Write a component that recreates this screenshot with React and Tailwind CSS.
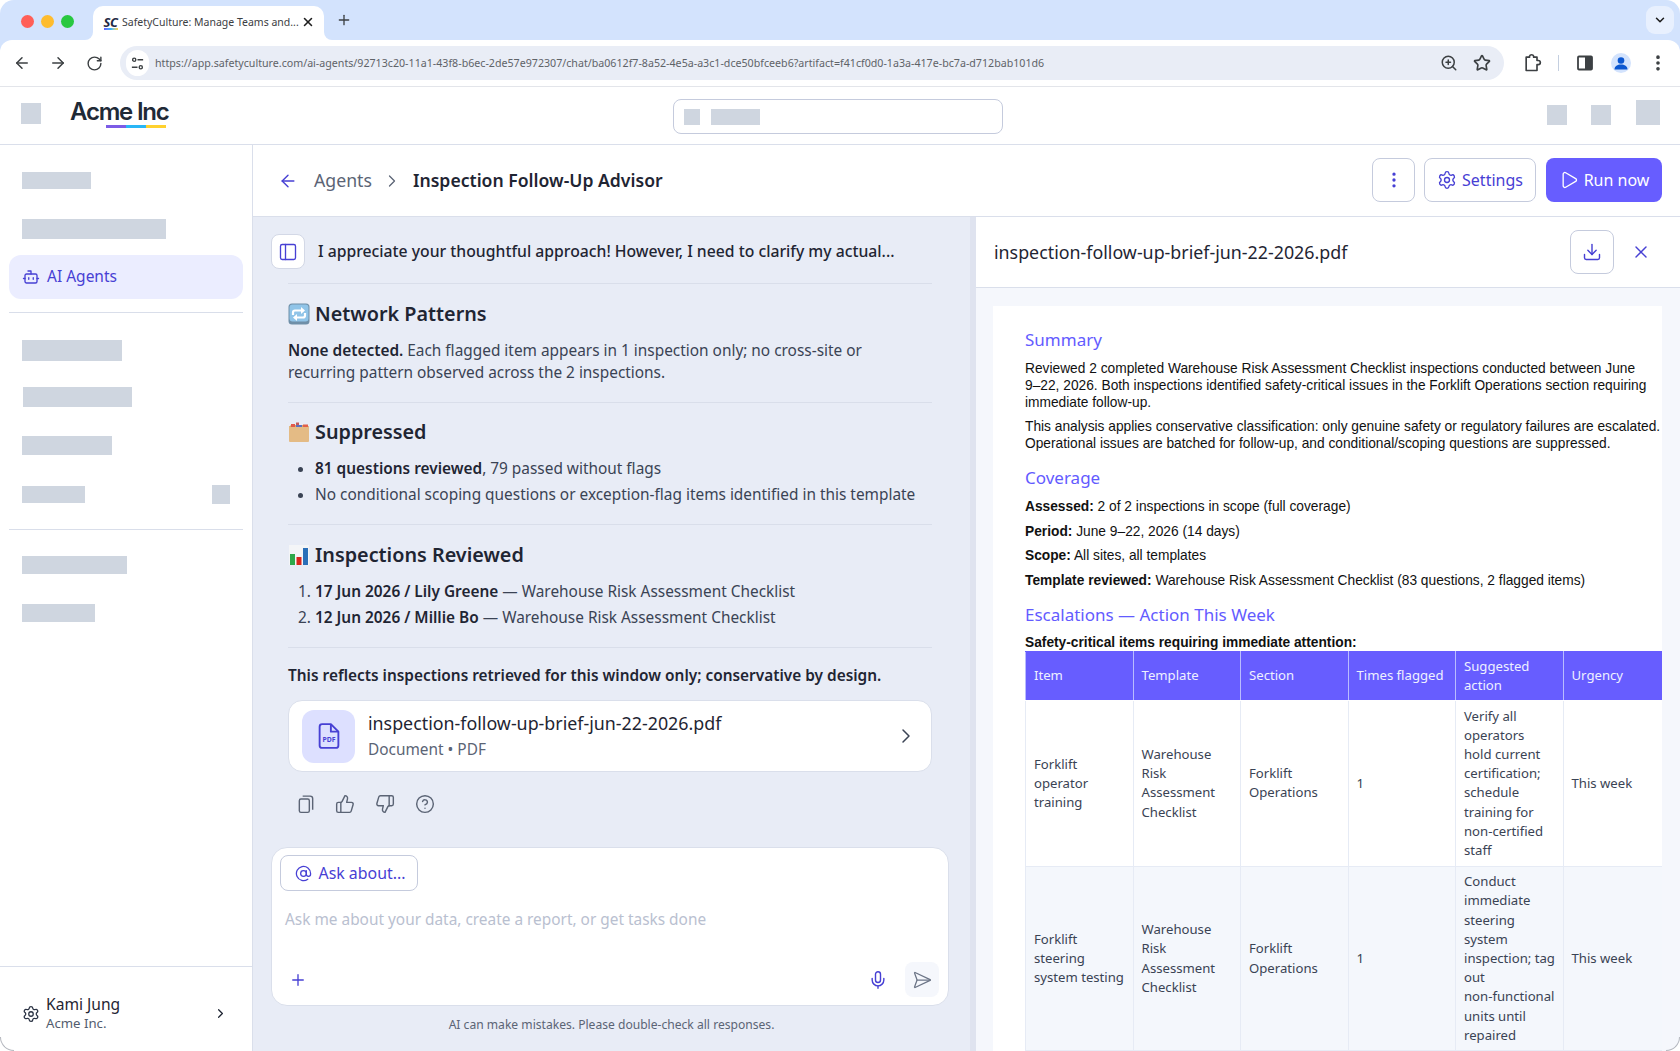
import React from "react";
import {
  ArrowLeft, ArrowRight, RotateCw, X, Plus, ZoomIn, Star, ChevronDown, ChevronRight, Bot, Settings,
  EllipsisVertical, Play, Download, PanelLeft, ThumbsUp, ThumbsDown, CircleHelp, AtSign, Mic, SendHorizontal,
} from "lucide-react";

const Sk = ({ className }) => <div className={"bg-[#cfd6e0] " + className} />;
const Hr = ({ className }) => <div className={"h-px bg-[#d9deea] " + className} />;

function TuneIcon() {
  return (
    <svg viewBox="0 0 16 16" className="w-[15px] h-[15px]" fill="none" stroke="#3c4043" strokeWidth="1.5">
      <circle cx="4.5" cy="4" r="1.7" /><path d="M8 4h6" />
      <circle cx="11.5" cy="12" r="1.7" /><path d="M2 12h6" />
    </svg>
  );
}

function PuzzleIcon() {
  return (
    <svg viewBox="0 0 24 24" className="w-[20px] h-[20px]" fill="none" stroke="#3c4043" strokeWidth="2" strokeLinejoin="round">
      <path d="M5 5h4V4a2.6 2.6 0 0 1 5 0v1h4v4h1.5a2.5 2.5 0 0 1 0 5H18v7H5z" />
    </svg>
  );
}

function SidePanelIcon() {
  return (
    <svg viewBox="0 0 20 20" className="w-[20px] h-[20px]">
      <rect x="3" y="3.5" width="14" height="13" rx="1" fill="none" stroke="#3c4043" strokeWidth="1.8" />
      <rect x="10" y="3.5" width="7" height="13" fill="#3c4043" />
    </svg>
  );
}

function ProfileIcon() {
  return (
    <div className="w-[20px] h-[20px] rounded-full bg-[#d3e3fd] flex items-center justify-center overflow-hidden">
      <svg viewBox="0 0 20 20" className="w-[20px] h-[20px]" fill="#0b57d0">
        <circle cx="10" cy="7.5" r="3.3" />
        <path d="M3.5 16.5c0-3.3 3-5 6.5-5s6.5 1.700 6.500 5z" />
      </svg>
    </div>
  );
}

function CycleEmoji() {
  return (
    <svg viewBox="0 0 22 22" className="w-[22px] h-[22px] shrink-0">
      <rect x="0.5" y="0.5" width="21" height="21" rx="3.500" fill="#6f8fa8" />
      <rect x="1.500" y="1.500" width="19" height="17" rx="3" fill="#90c4e8" />
      <path d="M5 12V9.500a2 2 0 0 1 2-2h7" fill="none" stroke="#fff" strokeWidth="2.200" />
      <path d="M13 4l4 3.500-4 3.500z" fill="#fff" />
      <path d="M17 10v2.500a2 2 0 0 1-2 2H8" fill="none" stroke="#fff" strokeWidth="2.200" />
      <path d="M9 11l-4 3.500 4 3.500z" fill="#fff" />
    </svg>
  );
}

function BoxEmoji() {
  return (
    <svg viewBox="0 0 22 22" className="w-[22px] h-[22px] shrink-0">
      <rect x="1" y="5" width="20" height="16" rx="1" fill="#e4bb85" />
      <path d="M1 6l2-2h16l2 2z" fill="#d9a96b" />
      <rect x="3" y="3" width="4" height="3" fill="#e25a4a" />
      <rect x="8" y="1.500" width="3" height="2.500" fill="#c25a5a" />
      <rect x="8" y="4" width="6" height="2" fill="#5b6fc2" />
      <rect x="15" y="3.500" width="5" height="2.500" fill="#e2604a" />
    </svg>
  );
}

function ChartEmoji() {
  return (
    <svg viewBox="0 0 22 22" className="w-[22px] h-[22px] shrink-0">
      <rect x="1" y="1" width="20" height="20" fill="#f4f5f7" />
      <rect x="2" y="10" width="5" height="11" fill="#2fa84a" />
      <rect x="8.500" y="13" width="5" height="8" fill="#d9261c" />
      <rect x="15" y="4" width="5" height="17" fill="#2a6fb8" />
    </svg>
  );
}

function PdfIcon() {
  return (
    <svg viewBox="0 0 24 24" className="w-[30px] h-[30px]" fill="none" stroke="#4740d4" strokeWidth="1.500" strokeLinejoin="round">
      <path d="M6.500 2.500h7l6 6v11a2 2 0 0 1-2 2h-11a2 2 0 0 1-2-2v-15a2 2 0 0 1 2-2z" />
      <path d="M13.500 2.500v6h6" />
      <text x="12" y="16.500" textAnchor="middle" fontSize="5.500" fontWeight="700" fill="#4740d4" stroke="none" fontFamily="Noto Sans, sans-serif">PDF</text>
    </svg>
  );
}

function CopyIcon() {
  return (
    <svg viewBox="0 0 24 24" className="w-[20px] h-[20px]" fill="none" stroke="#5b6475" strokeWidth="1.700" strokeLinejoin="round">
      <rect x="4" y="6" width="12" height="16" rx="2" />
      <path d="M8 2.500h9a3 3 0 0 1 3 3V19" />
    </svg>
  );
}

const headCols = ["Item", "Template", "Section", "Times flagged", "Suggested action", "Urgency"];
const lines = (arr) => arr.map((l, i) => <span key={i} className="block whitespace-nowrap">{l}</span>);
const rows = [
  ["Forklift operator training", "Warehouse Risk Assessment Checklist", "Forklift Operations", "1", lines(["Verify all", "operators", "hold current", "certification;", "schedule", "training for", "non-certified", "staff"]), "This week"],
  ["Forklift steering system testing", "Warehouse Risk Assessment Checklist", "Forklift Operations", "1", lines(["Conduct", "immediate", "steering", "system", "inspection; tag", "out", "non-functional", "units until", "repaired"]), "This week"],
];

function BrowserChrome() {
  return (
    <div className="bg-[#d3e3fd] shrink-0">
      <div className="h-[40px] flex items-end">
        <div className="flex items-center gap-[7px] pl-[21px] self-start mt-[15px]">
          <div className="w-[13px] h-[13px] rounded-full bg-[#ff5f57]" />
          <div className="w-[13px] h-[13px] rounded-full bg-[#febc2e]" />
          <div className="w-[13px] h-[13px] rounded-full bg-[#28c840]" />
        </div>
        <div className="relative ml-[19px] w-[231px] h-[34px] bg-white rounded-t-[10px] flex items-center pl-[9px]">
          <div className="absolute -left-[8px] bottom-0 w-[8px] h-[8px] bg-white"><div className="w-full h-full bg-[#d3e3fd] rounded-br-[8px]" /></div>
          <div className="absolute -right-[8px] bottom-0 w-[8px] h-[8px] bg-white"><div className="w-full h-full bg-[#d3e3fd] rounded-bl-[8px]" /></div>
          <div className="w-[17px] flex flex-col items-center shrink-0">
            <span className="text-[13px] leading-[11px] font-bold italic tracking-[-0.500px] text-[#1f2a44]">SC</span>
            <div className="w-[14px] h-[2px] bg-gradient-to-r from-[#6b5bff] via-[#29b6f6] to-[#ffd12e]" />
          </div>
          <span className="ml-[3px] w-[178px] text-[10.500px] text-[#3c4043] whitespace-nowrap overflow-hidden">SafetyCulture: Manage Teams and...</span>
          <X size={14} strokeWidth={2.600} className="text-[#1f1f1f] ml-[1px] -mt-[2px]" />
        </div>
        <div className="self-center ml-[12px]">
          <Plus size={16} strokeWidth={2} className="text-[#3c4043]" />
        </div>
        <div className="ml-auto mr-[6px] mb-[6px] w-[28px] h-[28px] rounded-[9px] bg-[#e8f0fe] flex items-center justify-center">
          <ChevronDown size={14} strokeWidth={2.600} className="text-[#1f1f1f]" />
        </div>
      </div>
      <div className="h-[47px] bg-white border-b border-[#e3e5ea] rounded-t-[12px] flex items-center px-[4px]">
        <div className="w-[36px] flex justify-center"><ArrowLeft size={18} className="text-[#3c4043]" /></div>
        <div className="w-[36px] flex justify-center"><ArrowRight size={18} className="text-[#3c4043]" /></div>
        <div className="w-[36px] flex justify-center"><RotateCw size={17} className="text-[#3c4043]" /></div>
        <div className="ml-[8px] w-[1384px] h-[34px] rounded-full bg-[#e9edf6] flex items-center pl-[6px]">
          <div className="w-[23px] h-[26px] rounded-full bg-white flex items-center justify-center shrink-0"><TuneIcon /></div>
          <span className="ml-[6px] text-[10.670px] text-[#5f6368] whitespace-nowrap w-[1100px] overflow-hidden">
            https://app.safetyculture.com/ai-agents/92713c20-11a1-43f8-b6ec-2de57e972307/chat/ba0612f7-8a52-4e5a-a3c1-dce50bfceeb6?artifact=f41cf0d0-1a3a-417e-bc7a-d712bab101d6
          </span>
          <ZoomIn size={18} className="text-[#3c4043] ml-[185px]" />
          <Star size={18} strokeWidth={2.200} className="text-[#3c4043] ml-[15px]" />
        </div>
        <div className="ml-[18px]"><PuzzleIcon /></div>
        <div className="ml-[16px] w-px h-[16px] bg-[#c4cfe0]" />
        <div className="ml-[16px]"><SidePanelIcon /></div>
        <div className="ml-[16px]"><ProfileIcon /></div>
        <div className="ml-[17px]"><EllipsisVertical size={20} strokeWidth={2.400} className="text-[#3c4043]" /></div>
      </div>
    </div>
  );
}

function AppHeader() {
  return (
    <div className="h-[58px] bg-white border-b border-[#dadfeb] flex items-center shrink-0 relative">
      <Sk className="ml-[21px] w-[20px] h-[21px] -mt-[4px]" />
      <div className="ml-[29px] -mt-[5px] flex flex-col">
        <span className="font-['Inter',sans-serif] text-[24px] leading-[28px] font-semibold tracking-[-1.200px] text-[#1f2a37]">Acme Inc</span>
        <div className="ml-[36px] w-[60px] h-[3px] flex -mt-[1px]">
          <div className="flex-1 bg-[#7c5ce6]" />
          <div className="flex-1 bg-[#29b6f6]" />
          <div className="flex-1 bg-[#ffd12e]" />
        </div>
      </div>
      <div className="ml-[504px] mt-[2px] w-[330px] h-[35px] rounded-[8px] border border-[#c5cbdd] flex items-center">
        <Sk className="ml-[10px] w-[16px] h-[16px]" />
        <Sk className="ml-[11px] w-[49px] h-[16px]" />
      </div>
      <div className="ml-auto flex items-end pr-[20px] mb-[6px]">
        <Sk className="w-[20px] h-[20px]" />
        <Sk className="ml-[24px] w-[20px] h-[20px]" />
        <Sk className="ml-[25px] w-[24px] h-[25px]" />
      </div>
    </div>
  );
}

function Sidebar() {
  return (
    <div className="w-[253px] shrink-0 border-r border-[#dadfeb] bg-white flex flex-col">
      <Sk className="ml-[22px] mt-[27px] w-[69px] h-[17px]" />
      <Sk className="ml-[22px] mt-[30px] w-[144px] h-[20px]" />
      <div className="ml-[9px] mt-[16px] w-[234px] h-[44px] rounded-[12px] bg-[#ebedff] flex items-center pl-[13px] text-[#4740d4]">
        <Bot size={18} strokeWidth={1.800} />
        <span className="ml-[7px] text-[15.500px]">AI Agents</span>
      </div>
      <Hr className="ml-[9px] mt-[13px] w-[234px]" />
      <Sk className="ml-[22px] mt-[27px] w-[100px] h-[21px]" />
      <Sk className="ml-[23px] mt-[26px] w-[109px] h-[20px]" />
      <Sk className="ml-[22px] mt-[29px] w-[90px] h-[19px]" />
      <div className="flex justify-between items-center ml-[22px] mt-[30px] w-[208px]">
        <Sk className="w-[63px] h-[17px]" />
        <Sk className="w-[18px] h-[19px]" />
      </div>
      <Hr className="ml-[9px] mt-[25px] w-[234px]" />
      <Sk className="ml-[22px] mt-[26px] w-[105px] h-[18px]" />
      <Sk className="ml-[22px] mt-[30px] w-[73px] h-[18px]" />
      <div className="mt-auto h-[85px] border-t border-[#dadfeb] flex items-center pl-[22px] pr-[24px] pt-[9px]">
        <Settings size={18} strokeWidth={1.700} className="text-[#2b3344]" />
        <div className="ml-[6px] flex flex-col">
          <span className="text-[15.600px] leading-[20px] text-[#1f2533]">Kami Jung</span>
          <span className="text-[13.200px] leading-[19px] text-[#525c6e]">Acme Inc.</span>
        </div>
        <ChevronRight size={15} strokeWidth={2} className="ml-auto text-[#1f2533]" />
      </div>
    </div>
  );
}

function ChatPanel() {
  const hd = "text-[19.800px] font-semibold text-[#1f2533] leading-[28px]";
  const st = "font-semibold text-[#1f2533]";
  return (
    <div className="w-[723px] shrink-0 bg-[#e8ecf6] border-r-[6px] border-[#dfe3ef] flex flex-col pt-[17px] text-[#3a4354] text-[15.400px] leading-[22px] overflow-hidden">
      <div className="flex items-center ml-[18px] h-[35px]">
        <div className="w-[34px] h-[35px] bg-white border border-[#d3d8e6] rounded-[8px] flex items-center justify-center">
          <PanelLeft size={20} strokeWidth={1.600} className="text-[#4740d4]" />
        </div>
        <span className="ml-[13px] -mt-[1px] text-[15.750px] font-medium text-[#1f2533]">I appreciate your thoughtful approach! However, I need to clarify my actual...</span>
      </div>
      <div className="ml-[35px] w-[644px] flex flex-col">
        <Hr className="mt-[14px]" />
        <div className="mt-[16px] h-[28px] flex items-center gap-[5px]">
          <CycleEmoji />
          <span className={hd}>Network Patterns</span>
        </div>
        <p className="mt-[12px]">
          <strong className={st}>None detected.</strong> Each flagged item appears in 1 inspection only; no cross-site or recurring pattern observed across the 2 inspections.
        </p>
        <Hr className="mt-[18px]" />
        <div className="mt-[15px] h-[28px] flex items-center gap-[5px]">
          <BoxEmoji />
          <span className={hd}>Suppressed</span>
        </div>
        <ul className="mt-[12px] list-disc pl-[27px] flex flex-col gap-[4px]">
          <li><strong className={st}>81 questions reviewed</strong>, 79 passed without flags</li>
          <li>No conditional scoping questions or exception-flag items identified in this template</li>
        </ul>
        <Hr className="mt-[18px]" />
        <div className="mt-[16px] h-[28px] flex items-center gap-[5px]">
          <ChartEmoji />
          <span className={hd}>Inspections Reviewed</span>
        </div>
        <ol className="mt-[12px] list-decimal pl-[27px] flex flex-col gap-[4px]">
          <li><strong className={st}>17 Jun 2026 / Lily Greene</strong> — Warehouse Risk Assessment Checklist</li>
          <li><strong className={st}>12 Jun 2026 / Millie Bo</strong> — Warehouse Risk Assessment Checklist</li>
        </ol>
        <Hr className="mt-[18px]" />
        <p className={"mt-[17px] " + st}>This reflects inspections retrieved for this window only; conservative by design.</p>
        <div className="mt-[13px] h-[72px] bg-white border border-[#dadfeb] rounded-[14px] flex items-center pl-[13px] pr-[13px]">
          <div className="w-[53px] h-[53px] rounded-[12px] bg-[#dde0ff] flex items-center justify-center"><PdfIcon /></div>
          <div className="ml-[13px] flex flex-col">
            <span className="text-[17.840px] leading-[26px] text-[#1f2533]">inspection-follow-up-brief-jun-22-2026.pdf</span>
            <span className="mt-[1px] text-[15.400px] leading-[26px] text-[#5b6475]">Document • PDF</span>
          </div>
          <ChevronRight size={24} strokeWidth={1.500} className="ml-auto text-[#3a4354]" />
        </div>
        <div className="mt-[20px] h-[24px] flex items-center pl-[8px] text-[#5b6475]">
          <CopyIcon />
          <ThumbsUp size={20} strokeWidth={1.700} className="ml-[19px]" />
          <ThumbsDown size={20} strokeWidth={1.700} className="ml-[20px]" />
          <CircleHelp size={20} strokeWidth={1.700} className="ml-[20px]" />
        </div>
      </div>
      <div className="mt-[31px] ml-[18px] w-[678px] h-[159px] shrink-0 bg-white border border-[#dadfeb] rounded-[16px] flex flex-col pt-[7px] px-[8px]">
        <div className="w-[138px] h-[36px] pl-[3px] border border-[#c5cbdd] rounded-[8px] flex items-center justify-center gap-[6px] text-[#4740d4]">
          <AtSign size={17} strokeWidth={1.800} />
          <span className="text-[15.900px]">Ask about...</span>
        </div>
        <span className="mt-[18px] ml-[5px] text-[15.400px] leading-[22px] text-[#b9c0d0]">Ask me about your data, create a report, or get tasks done</span>
        <div className="mt-[31px] flex items-center">
          <Plus size={18} strokeWidth={1.800} className="ml-[9px] text-[#4740d4]" />
          <Mic size={20} strokeWidth={1.700} className="ml-auto text-[#4740d4]" />
          <div className="ml-[17px] mr-[1px] w-[34px] h-[35px] rounded-[8px] bg-[#f5f7fc] flex items-center justify-center">
            <SendHorizontal size={20} strokeWidth={1.500} className="text-[#6b7486]" />
          </div>
        </div>
      </div>
      <p className="mt-[10px] h-[18px] shrink-0 text-center text-[12.100px] leading-[18px] text-[#5b6475] w-[717px]">AI can make mistakes. Please double-check all responses.</p>
    </div>
  );
}

function DocPanel() {
  const h = "text-[17px] leading-[24px] text-[#635bff]";
  const body = "font-['Liberation_Sans',Arial,sans-serif] text-[13.750px] leading-[17px] text-[#111]";
  return (
    <div className="flex-1 min-w-0 flex flex-col bg-white">
      <div className="h-[71px] shrink-0 border-b border-[#dadfeb] flex items-center pl-[18px] pr-[29px]">
        <span className="text-[17.840px] text-[#1f2533]">inspection-follow-up-brief-jun-22-2026.pdf</span>
        <div className="ml-auto w-[44px] h-[44px] rounded-[8px] border border-[#c5cbdd] flex items-center justify-center">
          <Download size={20} strokeWidth={1.700} className="text-[#4740d4]" />
        </div>
        <X size={20} strokeWidth={1.700} className="ml-[17px] text-[#4740d4]" />
      </div>
      <div className="flex-1 min-h-0 bg-[#f5f7fc] pt-[18px] pl-[17px] pr-[18px]">
        <div className="h-full bg-white pt-[22px] pl-[32px] overflow-hidden">
          <h2 className={h}>Summary</h2>
          <div className={body}>
            <p className="mt-[7.500px] w-[636px]">Reviewed 2 completed Warehouse Risk Assessment Checklist inspections conducted between June <span className="whitespace-nowrap">9–22,</span> 2026. Both inspections identified safety-critical issues in the Forklift Operations section requiring immediate follow-up.</p>
            <p className="mt-[7px] w-[644px]">This analysis applies conservative classification: only genuine safety or regulatory failures are escalated.<br />Operational issues are batched for follow-up, and conditional/scoping questions are suppressed.</p>
          </div>
          <h2 className={h + " mt-[14.500px]"}>Coverage</h2>
          <div className={body}>
            <p className="mt-[8px]"><strong>Assessed:</strong> 2 of 2 inspections in scope (full coverage)</p>
            <p className="mt-[7.500px]"><strong>Period:</strong> June 9–22, 2026 (14 days)</p>
            <p className="mt-[7.500px]"><strong>Scope:</strong> All sites, all templates</p>
            <p className="mt-[7.500px]"><strong>Template reviewed:</strong> Warehouse Risk Assessment Checklist (83 questions, 2 flagged items)</p>
          </div>
          <h2 className={h + " mt-[14.500px]"}>Escalations — Action This Week</h2>
          <p className={"mt-[7px] font-bold " + body}>Safety-critical items requiring immediate attention:</p>
          <table className="table-fixed border-collapse w-[646px] text-[13.150px] leading-[19.200px] text-[#3a4354]">
            <thead>
              <tr className="bg-[#675dff] text-[#eef0ff] h-[49px]">
                {headCols.map((c) => (
                  <th key={c} className="font-normal text-left align-middle px-[8px] border border-[#b9bcff] border-t-[#675dff] border-b-white">{c}</th>
                ))}
              </tr>
            </thead>
            <tbody>
              {rows.map((r, i) => (
                <tr key={i} className={i % 2 ? "bg-[#f4f7fc]" : "bg-white"}>
                  {r.map((c, j) => (
                    <td key={j} className="align-middle px-[8px] py-[5.500px] border border-[#e6ebf5]">{c}</td>
                  ))}
                </tr>
              ))}
            </tbody>
          </table>
        </div>
      </div>
    </div>
  );
}

export default function App() {
  return (
    <div className="relative w-[1680px] h-[1051px] bg-white overflow-hidden">
      <div className="w-full h-full rounded-[14px] overflow-hidden flex flex-col font-['Noto_Sans',sans-serif]">
        <BrowserChrome />
        <AppHeader />
        <div className="flex-1 min-h-0 flex">
          <Sidebar />
          <div className="flex-1 min-w-0 flex flex-col">
            <div className="h-[72px] shrink-0 bg-white border-b border-[#dadfeb] flex items-center pl-[25px] pr-[18px]">
              <ArrowLeft size={20} strokeWidth={1.700} className="text-[#4740d4]" />
              <span className="ml-[16px] text-[17.700px] text-[#5b6475]">Agents</span>
              <ChevronRight size={20} strokeWidth={1.500} className="ml-[10px] text-[#5b6475]" />
              <span className="ml-[11px] text-[17.600px] font-semibold text-[#1f2533]">Inspection Follow-Up Advisor</span>
              <div className="ml-auto mb-[1px] w-[43px] h-[44px] rounded-[8px] border border-[#c5cbdd] flex items-center justify-center">
                <EllipsisVertical size={20} strokeWidth={2} className="text-[#4740d4]" />
              </div>
              <div className="ml-[9px] mb-[1px] w-[112px] h-[44px] rounded-[8px] border border-[#c5cbdd] flex items-center justify-center gap-[5px] text-[#4740d4]">
                <Settings size={20} strokeWidth={1.600} />
                <span className="text-[16px]">Settings</span>
              </div>
              <div className="ml-[10px] mb-[1px] w-[116px] h-[44px] rounded-[8px] bg-[#675dff] flex items-center justify-center gap-[5px] text-white">
                <Play size={20} strokeWidth={1.600} />
                <span className="text-[16px]">Run now</span>
              </div>
            </div>
            <div className="flex-1 min-h-0 flex">
              <ChatPanel />
              <DocPanel />
            </div>
          </div>
        </div>
      </div>
      <div className="absolute left-0 bottom-0 w-[14px] h-[14px] rounded-bl-[14px] border-l border-b border-[#b5b8bf]" />
      <div className="absolute right-0 bottom-0 w-[14px] h-[14px] rounded-br-[14px] border-r border-b border-[#b5b8bf]" />
    </div>
  );
}
